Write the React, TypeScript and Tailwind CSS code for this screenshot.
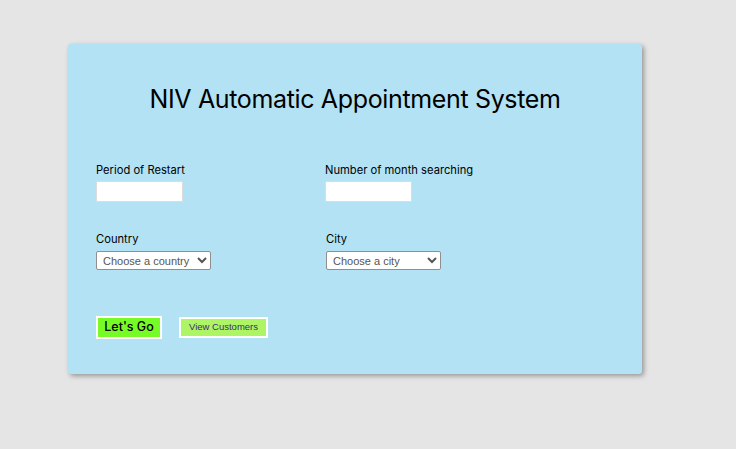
export default function App() {
  return (
    <div className="min-h-[449px] w-full bg-[#e5e5e5] pt-[44px] pl-[68px]" style={{ fontFamily: "Inter, 'Open Sans', sans-serif" }}>
      <div className="w-[574px] h-[330px] bg-[#b3e2f4] rounded-[3px] shadow-[2px_2px_5px_rgba(0,0,0,0.35)] pl-[28px] pt-[38px]">
        <h1 className="text-[25px] leading-[34px] text-black text-center pr-[28px] font-normal tracking-[-0.35px]">
          NIV Automatic Appointment System
        </h1>
        <div className="mt-[46px] flex">
          <div className="w-[229px]">
            <div className="text-[11.2px] leading-[16px] text-black">Period of Restart</div>
            <input type="text" className="mt-[3px] block w-[87px] h-[21px] bg-white border border-[#dcdcdc]" />
          </div>
          <div>
            <div className="text-[11.2px] leading-[16px] text-black">Number of month searching</div>
            <input type="text" className="mt-[3px] block w-[87px] h-[21px] bg-white border border-[#dcdcdc]" />
          </div>
        </div>
        <div className="mt-[29px] flex">
          <div className="w-[229px]">
            <div className="text-[11.2px] leading-[16px] text-black">Country</div>
            <select className="mt-[4px] block w-[115px] h-[19px] bg-white border border-[#8f8f8f] rounded-[2px] text-[11px] text-[#555] pl-[2px]" style={{ fontFamily: "'Liberation Sans', Arial, sans-serif" }}>
              <option>Choose a country</option>
            </select>
          </div>
          <div className="pl-[1px]">
            <div className="text-[11.2px] leading-[16px] text-black">City</div>
            <select className="mt-[4px] block w-[115px] h-[19px] bg-white border border-[#8f8f8f] rounded-[2px] text-[11px] text-[#555] pl-[2px]" style={{ fontFamily: "'Liberation Sans', Arial, sans-serif" }}>
              <option>Choose a city</option>
            </select>
          </div>
        </div>
        <div className="mt-[46px] flex items-center gap-[17px]">
          <button className="w-[66px] h-[23px] bg-[#77fb26] border-2 border-white text-[12.5px] text-black font-medium">
            Let's Go
          </button>
          <button className="w-[89px] h-[21px] bg-[#aef566] border-2 border-white text-[9.5px] text-[#3b2d6e]" style={{ fontFamily: "'Liberation Sans', Arial, sans-serif" }}>
            View Customers
          </button>
        </div>
      </div>
    </div>
  );
}
